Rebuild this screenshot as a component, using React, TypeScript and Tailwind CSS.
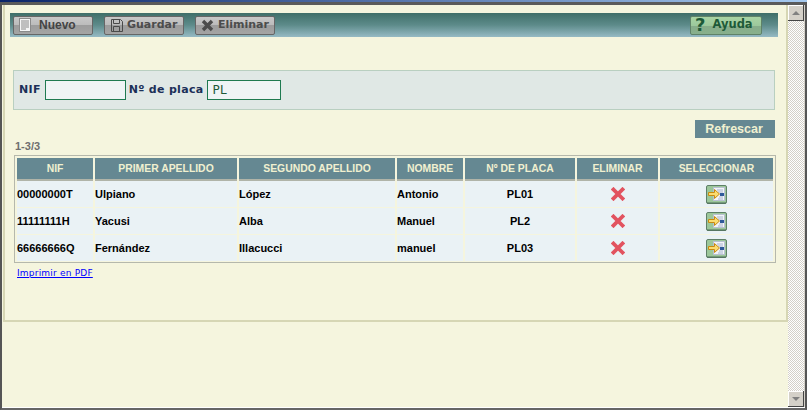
const rows = [
  { nif: '00000000T', ap1: 'Ulpiano', ap2: 'López', nombre: 'Antonio', placa: 'PL01' },
  { nif: '11111111H', ap1: 'Yacusi', ap2: 'Alba', nombre: 'Manuel', placa: 'PL2' },
  { nif: '66666666Q', ap1: 'Fernández', ap2: 'Illacucci', nombre: 'manuel', placa: 'PL03' },
]

const headers = ['NIF', 'PRIMER APELLIDO', 'SEGUNDO APELLIDO', 'NOMBRE', 'Nº DE PLACA', 'ELIMINAR', 'SELECCIONAR']

function NewIcon() {
  return (
    <svg width="12" height="14" viewBox="0 0 12 14">
      <rect x="0.5" y="0.5" width="11" height="13" fill="#f4f4f4" stroke="#8a8a8a" />
      <path d="M2 3h8M2 5h8M2 7h8M2 9h8M2 11h5" stroke="#8a8a8a" />
    </svg>
  )
}

function SaveIcon() {
  return (
    <svg width="13" height="13" viewBox="0 0 13 13" fill="none" stroke="#4a4a4a">
      <path d="M1.5 0.5h9l2 2v10h-11z" />
      <path d="M3.5 0.5v4h6v-4M3.5 12.5v-5h6v5" />
    </svg>
  )
}

function DeleteGrayIcon() {
  return (
    <svg width="13" height="13" viewBox="0 0 13 13">
      <path d="M2 2l9 9M11 2l-9 9" stroke="#4c4c4c" strokeWidth="3.4" />
    </svg>
  )
}

function RedX() {
  return (
    <svg width="14" height="14" viewBox="0 0 14 14" className="block">
      <path d="M2.5 2.5l9 9M11.5 2.5l-9 9" stroke="#e2535f" strokeWidth="3.8" strokeLinecap="square" />
    </svg>
  )
}

function SelectIcon() {
  return (
    <svg width="21" height="19" viewBox="0 0 21 19" className="block">
      <rect x="0.5" y="0.5" width="20" height="18" rx="1.5" fill="#9cc79a" stroke="#5e7f68" />
      <path d="M1 18h19" stroke="#4f6f5a" strokeWidth="1" />
      <rect x="7.5" y="2.5" width="11" height="13" fill="#f2f4f8" stroke="#b8c0d0" />
      <path d="M11 5h6M12 7h5M13 12h4M12 14h5" stroke="#a8b4d0" />
      <rect x="14" y="8" width="4" height="3" fill="#2f5a9a" />
      <path d="M2.5 7.5h6v-3l5 4.5-5 4.5v-3h-6z" fill="#fbdc70" stroke="#c88a10" />
    </svg>
  )
}

function ToolButton({ icon, label, className }: { icon: React.ReactNode; label: string; className: string }) {
  return (
    <div className={`flex h-[19px] w-20 items-center rounded-[2px] border border-[#666] bg-[linear-gradient(#c8c8c8_0%,#bcbcbc_45%,#9c9c9c_50%,#a4a4a4_100%)] pl-[5px] font-bold ${className}`}>
      {icon}
      {label}
    </div>
  )
}

export default function App() {
  return (
    <div className="h-[412px] w-[810px] bg-white">
      <div className="flex h-[410px] w-[807px] flex-col font-['Liberation_Sans',sans-serif]">
        <div className="h-[2px] bg-[linear-gradient(90deg,#0a246a,#a6caf0)]" />
        <div className="flex min-h-0 flex-1 flex-col border-x-[2px] border-t-[3px] border-b-[2px] border-x-[#555] border-t-[#5a5a5a] border-b-[#666] bg-[#f5f5de]">
          <div className="flex min-h-0 flex-1 border-b border-white">
            <div className="flex-1">
              <div className="ml-px h-[317px] border-[2px] border-t-0 border-[#d6d6b4] pt-[8px]">
                {/* toolbar */}
                <div className="mx-[5px] flex h-6 w-[768px] items-center bg-[linear-gradient(#3f6e68,#5d8b8a_50%,#96bac4)] pl-[3px]">
                  <ToolButton className="gap-[8px] font-['Liberation_Sans',sans-serif] text-[12px] text-[#444]" icon={<NewIcon />} label="Nuevo" />
                  <ToolButton className="ml-[11px] gap-[4px] font-['DejaVu_Sans',sans-serif] text-[11px] text-[#4c4c4c]" icon={<SaveIcon />} label="Guardar" />
                  <ToolButton className="ml-[11px] gap-[4px] font-['DejaVu_Sans',sans-serif] text-[11px] text-[#4c4c4c]" icon={<DeleteGrayIcon />} label="Eliminar" />
                  <div className="ml-auto mr-4 flex h-[19px] w-[72px] items-center gap-[7px] rounded-[2px] border border-[#5f8268] bg-[linear-gradient(#a8d4a4_0%,#9cc89c_50%,#86ad8a_55%,#88b08c_100%)] pl-1 font-['DejaVu_Sans',sans-serif] text-[11.5px] font-bold text-[#1d5a38]">
                    <span className="text-[18px] leading-none text-[#1d5a38]">?</span>
                    Ayuda
                  </div>
                </div>

                {/* filter */}
                <div className="ml-[8px] mt-[33px] flex h-10 w-[762px] items-center border border-[#b9cfc0] bg-[#e0e8e5] pl-[5px] font-['DejaVu_Sans',sans-serif] text-[11px] font-bold tracking-[0.3px] text-[#1c3058]">
                  <span>NIF</span>
                  <div className="ml-[4px] h-5 w-[81px] border border-[#1f7a50] bg-[#eff4f5]" />
                  <span className="ml-[3px]">Nº de placa</span>
                  <div className="ml-[4px] flex h-5 w-[74px] items-center border border-[#1f7a50] bg-[#eff4f5] pl-1 text-[12px] font-normal text-[#1d5a38]">PL</div>
                </div>

                <div className="ml-[690px] mt-[10px] flex h-[18px] w-20 items-center justify-center bg-[#658892] pr-[2px] text-[12.5px] font-bold text-[#f0f0d0]">
                  Refrescar
                </div>

                <div className="ml-[10px] mt-[2px] text-[11px] font-bold leading-[13px] text-[#6e6e6e]">1-3/3</div>

                {/* table */}
                <div className="ml-[9px] mt-[2px] w-[762px] border border-[#b5b8ac] px-px pb-px pt-[2px]">
                  <div className="grid grid-cols-[76px_142px_156px_66px_110px_81px_113px] gap-x-[2px] pl-px text-[10.4px]">
                    {headers.map((h) => (
                      <div key={h} className="flex h-[23px] items-center justify-center border-b-[2px] border-[#b0b4a8] bg-[#658892] font-bold text-[#f0f0d0]">
                        {h}
                      </div>
                    ))}
                  </div>
                  {rows.map((r, i) => (
                    <div key={r.nif} className={`grid h-[26px] grid-cols-[76px_142px_156px_66px_110px_81px_113px] gap-x-[2px] pl-px text-[11px] font-bold text-black ${i > 0 ? 'mt-px' : ''}`}>
                      <div className="flex items-center bg-[#eaf2f5]">{r.nif}</div>
                      <div className="flex items-center bg-[#eaf2f5]">{r.ap1}</div>
                      <div className="flex items-center bg-[#eaf2f5]">{r.ap2}</div>
                      <div className="flex items-center bg-[#eaf2f5]">{r.nombre}</div>
                      <div className="flex items-center justify-center bg-[#eaf2f5]">{r.placa}</div>
                      <div className="flex items-center justify-center bg-[#eaf2f5]"><RedX /></div>
                      <div className="flex items-center justify-center bg-[#eaf2f5]"><SelectIcon /></div>
                    </div>
                  ))}
                </div>
                <a className="ml-[12px] mt-[5px] block font-['DejaVu_Sans',sans-serif] text-[9px] leading-[11px] tracking-[0.2px] text-[#0000ff] underline">Imprimir en PDF</a>
              </div>
            </div>

            {/* scrollbar */}
            <div className="flex w-4 flex-col justify-between bg-[repeating-conic-gradient(#d4d0c8_0%_25%,#ffffff_0%_50%)] bg-size-[2px_2px]">
              <div className="flex h-4 items-center justify-center border-b border-r border-[#444] bg-[#d4d0c8] shadow-[inset_1px_1px_0_#fff]">
                <div className="h-0 w-0 border-x-[4px] border-b-[4px] border-x-transparent border-b-[#808080]" />
              </div>
              <div className="flex h-4 items-center justify-center border-b border-r border-[#444] bg-[#d4d0c8] shadow-[inset_1px_1px_0_#fff]">
                <div className="h-0 w-0 border-x-[4px] border-t-[4px] border-x-transparent border-t-[#808080]" />
              </div>
            </div>
            <div className="w-px bg-[#d4d0c8]" />
          </div>
        </div>
      </div>
    </div>
  )
}
